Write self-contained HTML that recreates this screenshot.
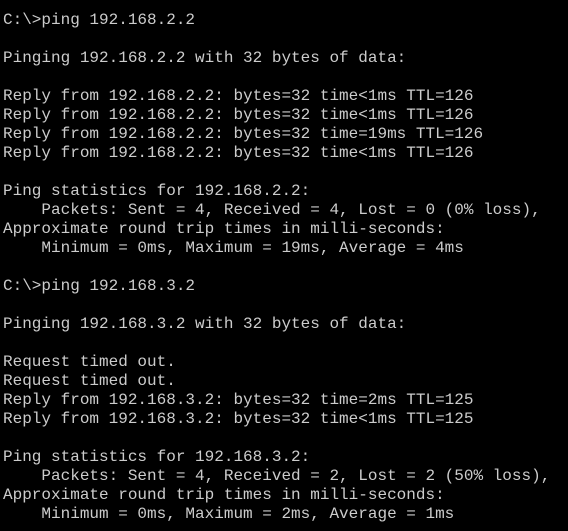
<!DOCTYPE html>
<html><head><meta charset="utf-8"><style>
html,body{margin:0;padding:0;background:#000;width:568px;height:531px;overflow:hidden}
pre{margin:0;padding:11px 0 0 3px;font-family:"Liberation Mono",monospace;font-size:16px;line-height:19px;color:#cccccc}
</style></head><body><pre>C:\&gt;ping 192.168.2.2

Pinging 192.168.2.2 with 32 bytes of data:

Reply from 192.168.2.2: bytes=32 time&lt;1ms TTL=126
Reply from 192.168.2.2: bytes=32 time&lt;1ms TTL=126
Reply from 192.168.2.2: bytes=32 time=19ms TTL=126
Reply from 192.168.2.2: bytes=32 time&lt;1ms TTL=126

Ping statistics for 192.168.2.2:
    Packets: Sent = 4, Received = 4, Lost = 0 (0% loss),
Approximate round trip times in milli-seconds:
    Minimum = 0ms, Maximum = 19ms, Average = 4ms

C:\&gt;ping 192.168.3.2

Pinging 192.168.3.2 with 32 bytes of data:

Request timed out.
Request timed out.
Reply from 192.168.3.2: bytes=32 time=2ms TTL=125
Reply from 192.168.3.2: bytes=32 time&lt;1ms TTL=125

Ping statistics for 192.168.3.2:
    Packets: Sent = 4, Received = 2, Lost = 2 (50% loss),
Approximate round trip times in milli-seconds:
    Minimum = 0ms, Maximum = 2ms, Average = 1ms</pre></body></html>
